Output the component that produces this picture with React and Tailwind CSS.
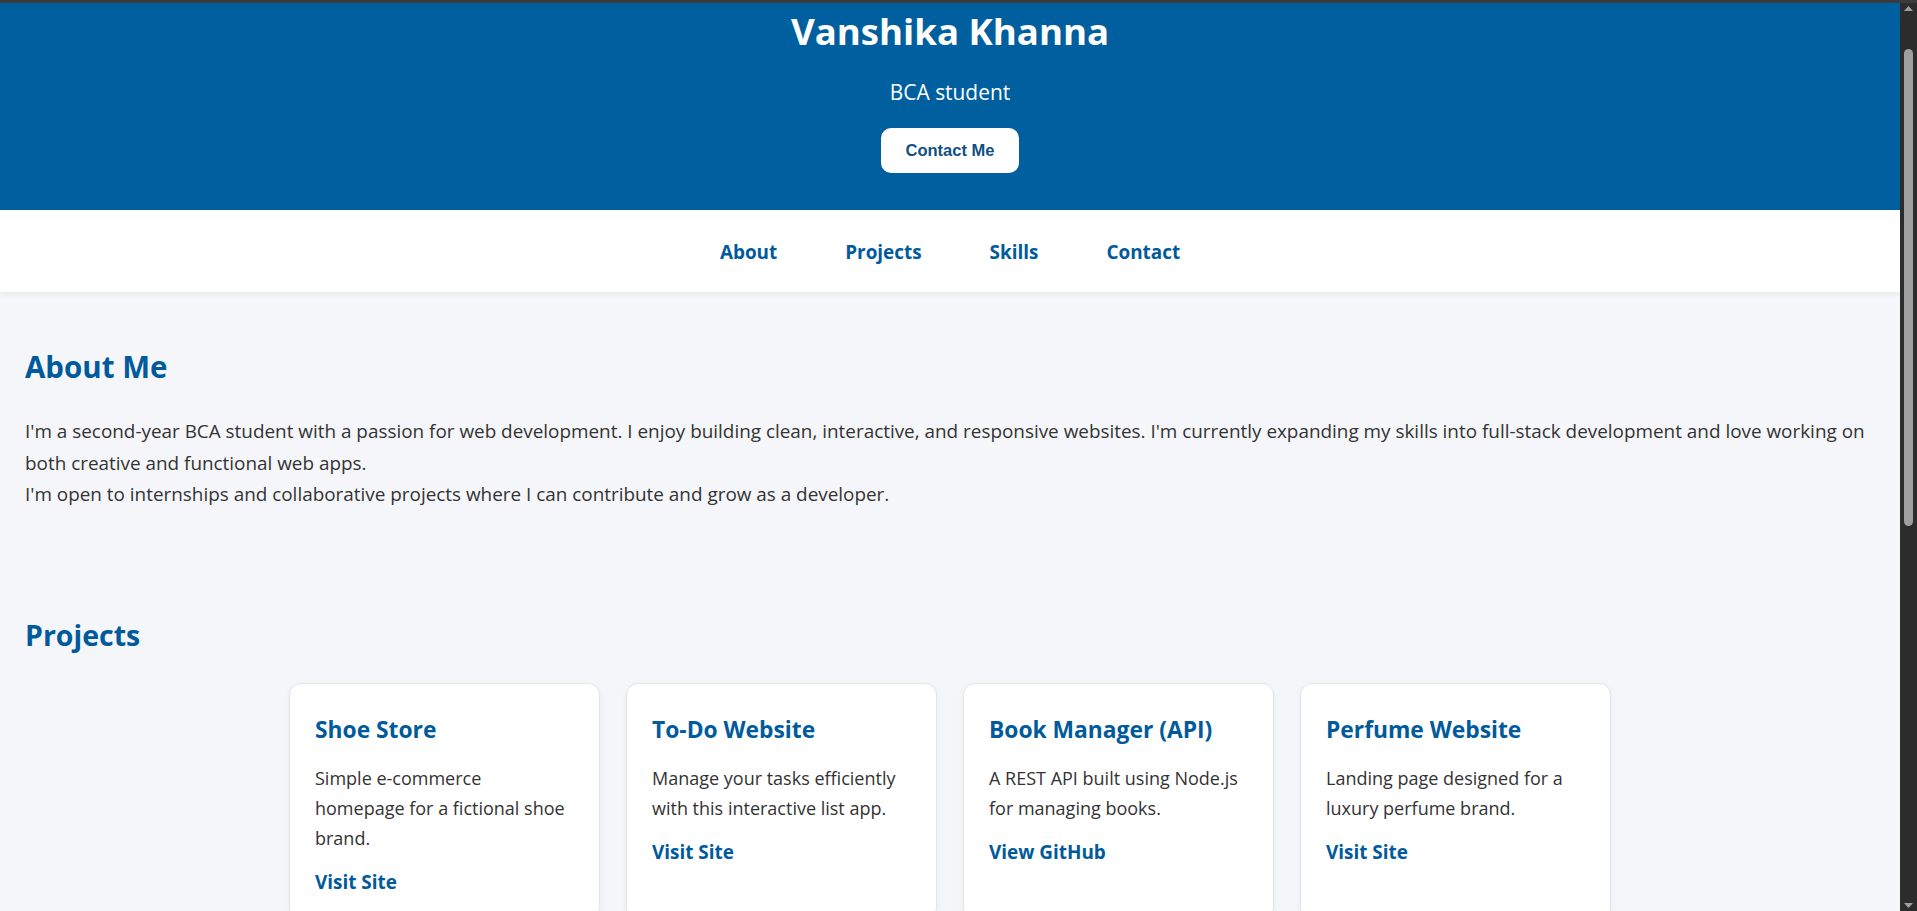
import React from "react";

const projects = [
  {
    title: "Shoe Store",
    text: "Simple e-commerce homepage for a fictional shoe brand.",
    link: "Visit Site",
  },
  {
    title: "To-Do Website",
    text: "Manage your tasks efficiently with this interactive list app.",
    link: "Visit Site",
  },
  {
    title: "Book Manager (API)",
    text: "A REST API built using Node.js for managing books.",
    link: "View GitHub",
  },
  {
    title: "Perfume Website",
    text: "Landing page designed for a luxury perfume brand.",
    link: "Visit Site",
  },
];

const navLinks = ["About", "Projects", "Skills", "Contact"];

const ProjectCard = ({ project }) => (
  <div className="w-[311px] shrink-0 bg-white border border-[#e2e5ea] rounded-[12px] shadow-[0_2px_6px_rgba(0,0,0,0.05)] pt-[32px] px-[25px] pb-[24px]">
    <h3 className="text-[22.8px] leading-[28px] font-bold text-[#005a9c]">
      {project.title}
    </h3>
    <p className="mt-[19px] text-[18px] leading-[30px] text-[#333]">
      {project.text}
    </p>
    <a className="block mt-[16px] text-[18.9px] leading-[26px] font-bold text-[#005a9c]">
      {project.link}
    </a>
  </div>
);

export default function App() {
  return (
    <div className="h-screen overflow-hidden flex flex-col bg-[#2c2c2c] font-['Open_Sans',sans-serif]">
      {/* window edge */}
      <div className="h-[3px] shrink-0 bg-[#3b3b3b]" />

      <div className="flex flex-1 min-h-0">
        <div className="flex-1 min-w-0 bg-[#f5f6fa] overflow-hidden">
          {/* Header */}
          <header className="bg-[#005f9f] text-white flex flex-col items-center pt-[6px] pb-[37px]">
            <h1 className="text-[36.6px] leading-[44px] font-bold">
              Vanshika Khanna
            </h1>
            <p className="mt-[25px] text-[20.9px] leading-[28px]">
              BCA student
            </p>
            <button className="mt-[22px] h-[45px] px-[25px] bg-white rounded-[10px] font-['Liberation_Sans',Arial,sans-serif] font-bold text-[16.5px] text-[#0f4f86]">
              Contact Me
            </button>
          </header>

          {/* Nav */}
          <nav className="h-[82px] pt-[2px] bg-white shadow-[0_2px_5px_rgba(0,0,0,0.06)] flex items-center justify-center gap-[68px] relative">
            {navLinks.map((link) => (
              <a
                key={link}
                className="text-[18.9px] font-bold text-[#005a9c]"
              >
                {link}
              </a>
            ))}
          </nav>

          <main className="pl-[25px] pr-[20px]">
            {/* About */}
            <section className="pt-[57px]">
              <h2 className="text-[29.5px] leading-[35px] font-bold text-[#005a9c]">
                About Me
              </h2>
              <p className="mt-[32px] text-[18.9px] leading-[31.7px] text-[#333]">
                I'm a second-year BCA student with a passion for web
                development. I enjoy building clean, interactive, and responsive
                websites. I'm currently expanding my skills into full-stack
                development and love working on both creative and functional
                web apps.
                <br />
                I'm open to internships and collaborative projects where I can
                contribute and grow as a developer.
              </p>
            </section>

            {/* Projects */}
            <section className="pt-[107px]">
              <h2 className="text-[28.5px] leading-[35px] font-bold text-[#005a9c]">
                Projects
              </h2>
              <div className="mt-[30px] pr-[5px] flex justify-center gap-[26px]">
                {projects.map((p) => (
                  <ProjectCard key={p.title} project={p} />
                ))}
              </div>
            </section>
          </main>
        </div>

        {/* scrollbar */}
        <div className="w-[17px] shrink-0 bg-[#2c2c2c] flex flex-col items-center">
          <svg width="9" height="5" viewBox="0 0 9 5" className="mt-[3px]">
            <polygon points="4.5,0 9,5 0,5" fill="#9f9f9f" />
          </svg>
          <div className="mt-[38px] w-[9px] h-[477px] rounded-full bg-[#9f9f9f]" />
          <div className="flex-1" />
          <svg width="9" height="5" viewBox="0 0 9 5" className="mb-[3px]">
            <polygon points="0,0 9,0 4.5,5" fill="#9f9f9f" />
          </svg>
        </div>
      </div>
    </div>
  );
}
